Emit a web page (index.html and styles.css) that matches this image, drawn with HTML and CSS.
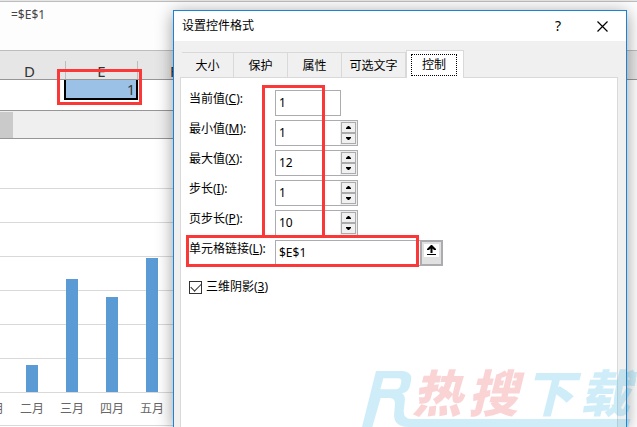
FILE: index.html
```html
<!DOCTYPE html>
<html lang="zh-CN">
<head>
<meta charset="utf-8">
<title>设置控件格式</title>
<link rel="stylesheet" href="styles.css">
</head>
<body>
<main class="sheet">
  <div class="formula-bar">=$E$1</div>
  <div class="column-heads">
    <div class="head">D</div>
    <div class="head">E</div>
    <div class="head">F</div>
  </div>
  <div class="sheet-body">
    <div class="cells">
      <div class="cell"></div>
      <div class="cell selected">1</div>
    </div>
    <div class="scrollbar"><div class="thumb"></div></div>
    <section class="chart">
      <div class="plot">
        <div class="bar" style="height:0"></div>
        <div class="bar" style="height:27px"></div>
        <div class="bar" style="height:113px"></div>
        <div class="bar" style="height:95px"></div>
        <div class="bar" style="height:134px"></div>
      </div>
      <div class="months">
        <span>一月</span><span>二月</span><span>三月</span><span>四月</span><span>五月</span>
      </div>
    </section>
  </div>
</main>

<section class="dialog" role="dialog" aria-labelledby="dialog-title">
  <header class="titlebar">
    <h1 id="dialog-title">设置控件格式</h1>
    <button class="title-button" type="button">?</button>
    <button class="title-button" type="button" aria-label="关闭">
      <svg width="11" height="11" viewBox="0 0 11 11"><path d="M.5 .5l10 10M10.500 .5l-10 10" fill="none" stroke="#000" stroke-width="1.200"/></svg>
    </button>
  </header>
  <div class="dialog-body">
    <div class="tabs" role="tablist">
      <button class="tab short" type="button" role="tab">大小</button>
      <button class="tab" type="button" role="tab">保护</button>
      <button class="tab" type="button" role="tab">属性</button>
      <button class="tab long" type="button" role="tab">可选文字</button>
      <button class="tab active" type="button" role="tab" aria-selected="true"><span class="focus">控制</span></button>
    </div>
    <form class="panel">
      <div class="row">
        <label for="current">当前值(<u>C</u>):</label>
        <div class="field plain"><input id="current" type="text" value="1"></div>
      </div>
      <div class="row">
        <label for="minimum">最小值(<u>M</u>):</label>
        <div class="field spin"><input id="minimum" type="text" value="1">
          <div class="spinner">
            <button type="button" aria-label="增加"><svg width="5" height="3" viewBox="0 0 5 3"><path d="M0 3V2L2 0h1l2 2v1z"/></svg></button>
            <button type="button" aria-label="减少"><svg width="5" height="3" viewBox="0 0 5 3"><path d="M0 0v1l2 2h1l2-2V0z"/></svg></button>
          </div>
        </div>
      </div>
      <div class="row">
        <label for="maximum">最大值(<u>X</u>):</label>
        <div class="field spin"><input id="maximum" type="text" value="12">
          <div class="spinner">
            <button type="button" aria-label="增加"><svg width="5" height="3" viewBox="0 0 5 3"><path d="M0 3V2L2 0h1l2 2v1z"/></svg></button>
            <button type="button" aria-label="减少"><svg width="5" height="3" viewBox="0 0 5 3"><path d="M0 0v1l2 2h1l2-2V0z"/></svg></button>
          </div>
        </div>
      </div>
      <div class="row">
        <label for="step">步长(<u>I</u>):</label>
        <div class="field spin"><input id="step" type="text" value="1">
          <div class="spinner">
            <button type="button" aria-label="增加"><svg width="5" height="3" viewBox="0 0 5 3"><path d="M0 3V2L2 0h1l2 2v1z"/></svg></button>
            <button type="button" aria-label="减少"><svg width="5" height="3" viewBox="0 0 5 3"><path d="M0 0v1l2 2h1l2-2V0z"/></svg></button>
          </div>
        </div>
      </div>
      <div class="row">
        <label for="page">页步长(<u>P</u>):</label>
        <div class="field spin"><input id="page" type="text" value="10">
          <div class="spinner">
            <button type="button" aria-label="增加"><svg width="5" height="3" viewBox="0 0 5 3"><path d="M0 3V2L2 0h1l2 2v1z"/></svg></button>
            <button type="button" aria-label="减少"><svg width="5" height="3" viewBox="0 0 5 3"><path d="M0 0v1l2 2h1l2-2V0z"/></svg></button>
          </div>
        </div>
      </div>
      <div class="row">
        <label for="link">单元格链接(<u>L</u>):</label>
        <div class="field link"><input id="link" type="text" value="$E$1"></div>
        <button class="picker" type="button" aria-label="选择单元格">
          <svg width="15" height="13" viewBox="0 0 15 13"><path fill="#fff" d="M0 0h15v13H0z"/><path d="M7 1h1l4 4v1h-2L8.500 4.500V9h-2V4.500L5 6H3V5zM3 10h9v1H3z"/></svg>
        </button>
      </div>
      <div class="check-row">
        <input id="shade" type="checkbox" checked>
        <label for="shade">三维阴影(<u>3</u>)</label>
      </div>
    </form>
  </div>
</section>

<div class="mark mark-cell"></div>
<div class="mark mark-values"></div>
<div class="mark mark-link"></div>

<div class="watermark">
  <svg class="watermark-shape" width="277" height="77" viewBox="0 0 831 231">
    <path fill="#00a5e3" fill-rule="evenodd" d="M48 63H130Q158 67 153 92L149 110Q145 125 126 130Q137 137 134 155L131 184Q131 207 154 207H811L805 231H145Q104 230 102 197L105 162Q106 145 89 144L62 144L37 231H6ZM70 85L61 118H108Q119 117 122 104L124 94Q125 85 114 85Z"/>
    <path fill="#00a5e3" d="M789 66H831L824 108H812L816 82H804L800 108H784Z"/>
    <path fill="#149a48" d="M765 138H786L782 164H789L765 190L754 164H761Z"/>
  </svg>
  <div class="watermark-text"><span class="warm">热</span><span class="warm">搜</span><span>下</span><span>载</span></div>
</div>
</body>
</html>
```
FILE: styles.css
```css
* { box-sizing: border-box; }

html, body { height: 100%; }

body {
  margin: 0;
  position: relative;
  overflow: hidden;
  background: #fff;
  color: #000;
  font: 12px/16px "Noto Sans", "Noto Sans CJK SC", sans-serif;
}

button, input { font: inherit; color: inherit; margin: 0; padding: 0; }
u { text-underline-offset: 1px; }

/* Worksheet */
.sheet { border-top: 1px solid #e6e6e6; }

.formula-bar {
  height: 50px;
  padding: 5px 11px;
  border-top: 1px solid #bdbdbd;
  border-bottom: 1px solid #bdbdbd;
  background: #fdfdfd;
  color: #444;
}

.column-heads {
  display: flex;
  height: 29px;
  padding-top: 10px;
  border-bottom: 1px solid #969696;
  background: #e6e6e6;
}

.head {
  width: 72px;
  border-right: 1px solid #bdbdbd;
  font-size: 15px;
  line-height: 20px;
  text-align: center;
  color: #333;
}
.head:first-child { margin-left: -6px; }
.head:last-child { border-right: 0; }

.sheet-body { margin-right: 40px; }

.cells {
  display: flex;
  height: 31px;
  border-bottom: 1px solid #969696;
}
.cell { width: 64px; }
.selected {
  width: 74px;
  height: 20px;
  padding-right: 1px;
  border: 2px solid #000;
  border-top: 0;
  background: #9bc2e6;
  font-size: 14px;
  line-height: 20px;
  text-align: right;
  color: #333;
}

.scrollbar {
  height: 28px;
  padding-top: 1px;
  border-bottom: 1px solid #969696;
  background: #efefef;
}
.thumb { width: 13px; height: 100%; background: #cacaca; }

.chart { overflow: hidden; border-bottom: 1px solid #d9d9d9; }
.plot, .months {
  display: grid;
  grid-template-columns: repeat(5, 40px);
  margin-left: -28px;
  justify-items: center;
}
.plot {
  height: 254px;
  align-items: end;
  background: repeating-linear-gradient(to top, #d9d9d9 0 1px, transparent 1px 34px) bottom / 100% 205px no-repeat;
}
.bar { width: 12px; background: #5b9bd5; margin-bottom: 1px; }
.months { height: 32px; padding-top: 8px; color: #666; }

/* Dialog */
.dialog {
  position: absolute;
  top: 10px;
  right: 10px;
  bottom: 0;
  left: 173px;
  display: flex;
  flex-direction: column;
  border: 1px solid #1883d7;
  border-bottom: 0;
  background: #f0f0f0;
  box-shadow: 0 3px 16px rgba(0, 0, 0, .4);
}

.titlebar {
  display: flex;
  align-items: center;
  height: 30px;
  padding: 0 2px 0 8px;
  background: #fff;
}
.titlebar h1 { flex: 1; margin: 0; font-size: 12px; font-weight: 400; }
.title-button {
  display: flex;
  align-items: center;
  justify-content: center;
  width: 44px;
  height: 30px;
  border: 0;
  background: none;
  font-size: 14px;
}

.dialog-body {
  flex: 1;
  display: flex;
  flex-direction: column;
  padding: 9px 8px 0 6px;
}

.tabs { display: flex; align-items: flex-end; padding-left: 2px; height: 27px; }
.tab {
  width: 54px;
  height: 25px;
  padding-top: 2px;
  border: 0;
  border-top: 1px solid #d9d9d9;
  border-right: 1px solid #d9d9d9;
  background: #f0f0f0;
}
.short { width: 52px; }
.long { width: 64px; }
.active {
  position: relative;
  z-index: 1;
  width: 58px;
  height: 28px;
  margin-bottom: -1px;
  padding: 3px 6px 2px 4px;
  border-left: 1px solid #d9d9d9;
  background: #fff;
}
.focus { display: block; border: 1px dotted #000; line-height: 20px; }

.panel {
  flex: 1;
  padding: 12px 8px;
  border: 1px solid #d9d9d9;
  border-bottom: 0;
  background: #fff;
}

.row { display: flex; height: 30px; }
.row label { width: 86px; padding-top: 1px; white-space: nowrap; }
.field {
  display: flex;
  height: 26px;
  border: 1px solid #ababb0;
  background: #fff;
}
.field input {
  flex: 1;
  min-width: 0;
  padding-left: 3px;
  border: 0;
  background: none;
  outline: 0;
}
.plain { width: 66px; }
.spin { width: 83px; }
.link { width: 146px; }

.spinner {
  display: flex;
  flex-direction: column;
  padding: 1px;
  background: #eee;
}
.spinner button {
  flex: 1;
  display: flex;
  align-items: center;
  justify-content: center;
  width: 15px;
  border: 1px solid #ababab;
  background: #f0f0f0;
}

.picker {
  display: flex;
  justify-content: center;
  width: 22px;
  height: 26px;
  padding-top: 2px;
  border: 2px solid #ababb0;
  border-left-width: 1px;
  background: #e1e1e1;
}

.check-row { display: flex; align-items: center; gap: 4px; padding-top: 9px; }
.check-row input {
  appearance: none;
  width: 13px;
  height: 13px;
  border: 1px solid #333;
  background: #fff;
  display: grid;
  place-items: center;
}
.check-row input:checked::before {
  content: "";
  width: 9px;
  height: 5px;
  border: solid #333;
  border-width: 0 0 1px 1px;
  transform: translateY(-1px) rotate(-45deg);
}

/* Highlight frames laid over the window */
.mark { position: absolute; border: 3px solid #fb3838; pointer-events: none; }
.mark-cell { left: 57px; top: 69px; width: 85px; height: 36px; }
.mark-values { left: 262px; top: 85px; width: 63px; height: 153px; }
.mark-link { left: 186px; top: 235px; width: 233px; height: 32px; }

/* Watermark */
.watermark {
  position: absolute;
  right: 0;
  bottom: 0;
  width: 277px;
  height: 77px;
  overflow: hidden;
  opacity: .19;
  pointer-events: none;
}
.watermark-shape { display: block; }
.watermark-text {
  position: absolute;
  left: 52px;
  top: 10px;
  display: grid;
  grid-template-columns: repeat(4, 56px);
  color: #00a5e3;
  font: italic 900 50px/60px "Noto Sans CJK SC", sans-serif;
}
.warm { color: #e61e28; }
```
